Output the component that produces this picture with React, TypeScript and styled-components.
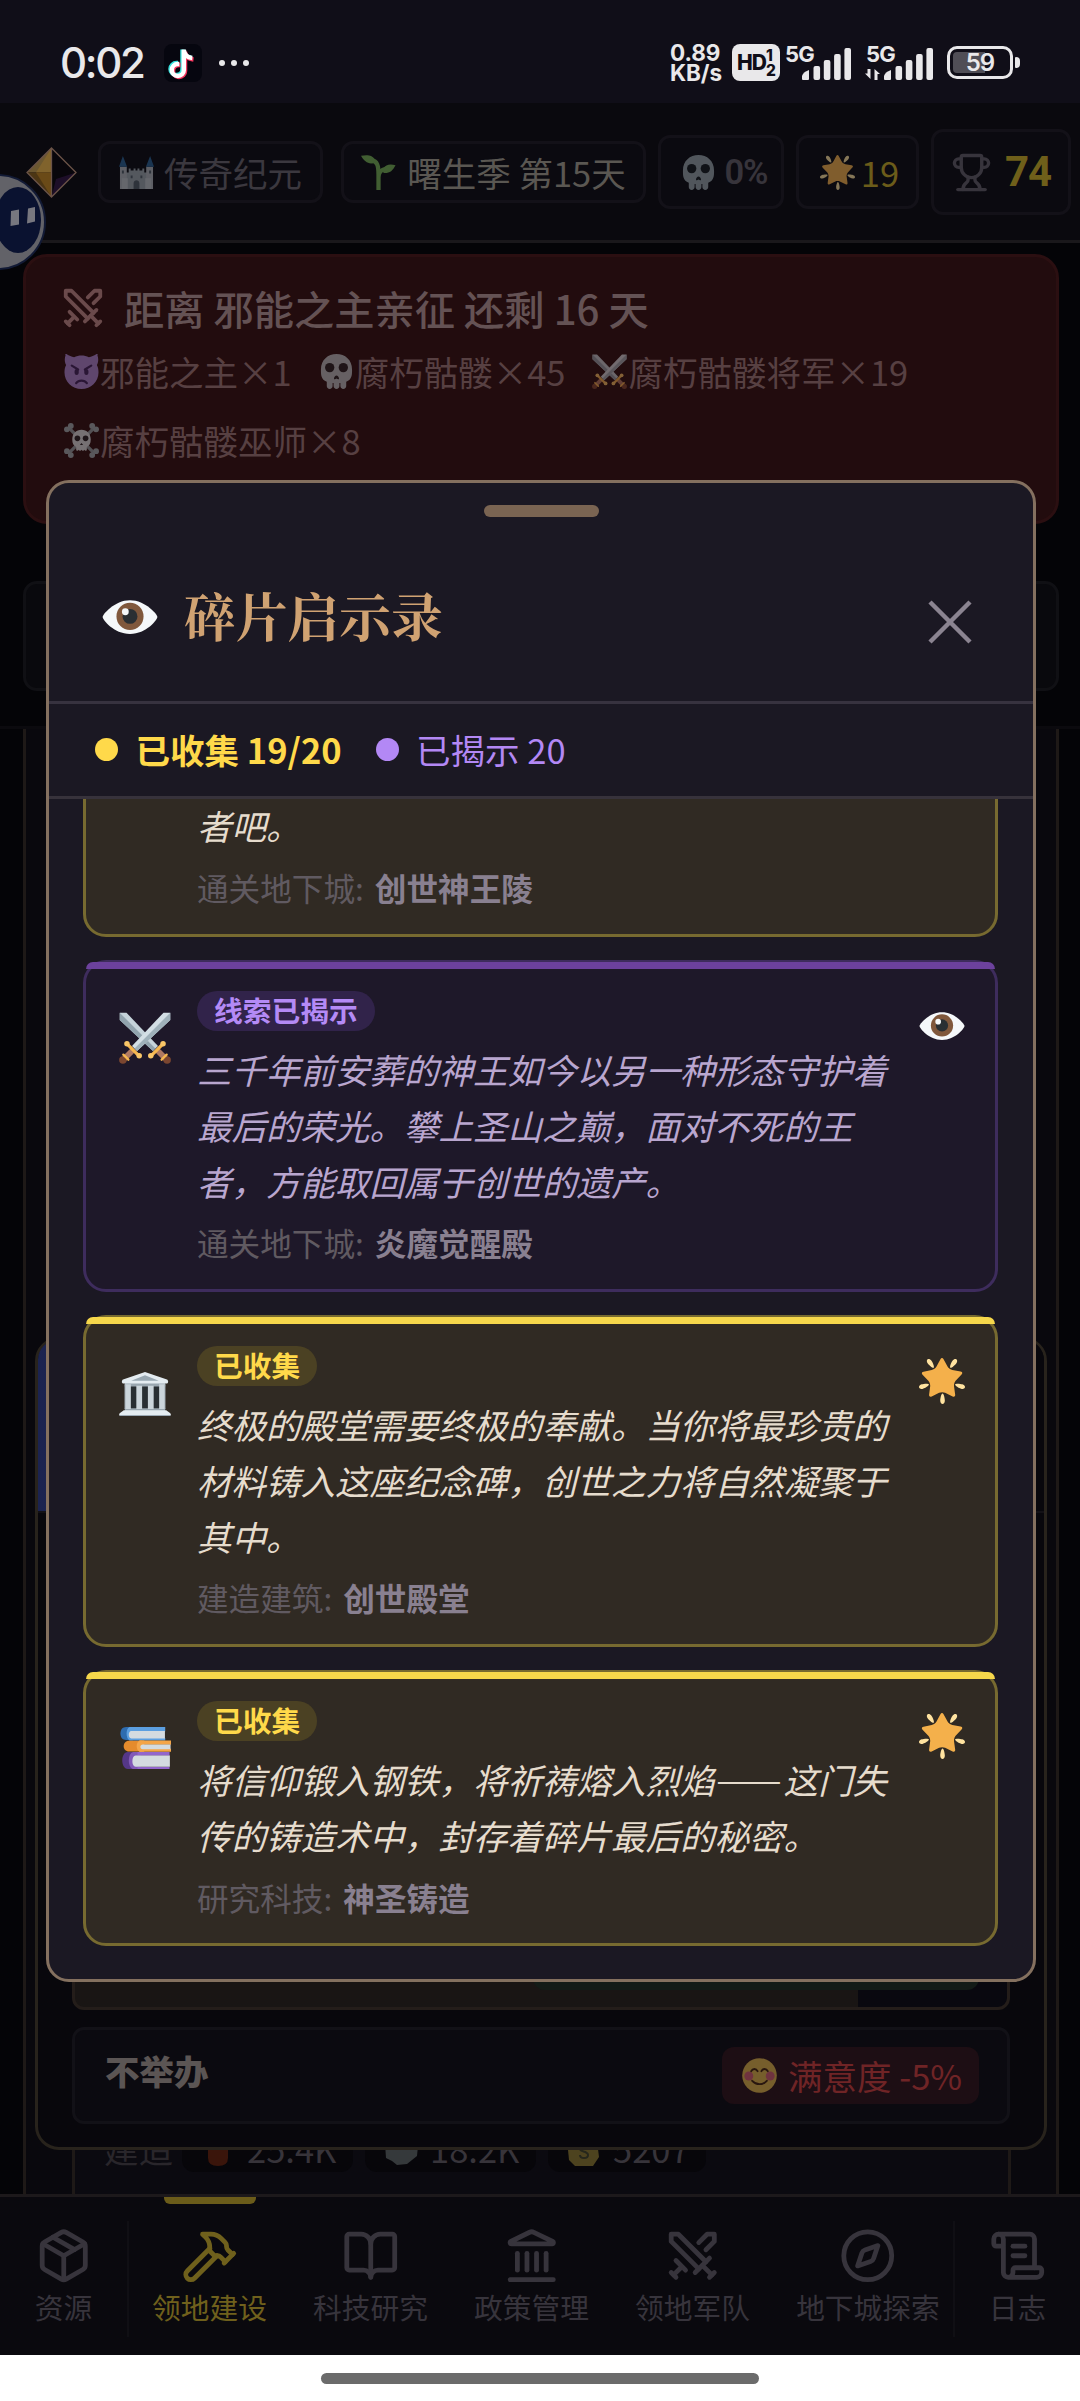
import React from "react";
import styled, { createGlobalStyle, css } from "styled-components";
import {
  BookOpen,
  Compass,
  Hammer,
  Landmark,
  Package,
  ScrollText,
  Swords,
  Trophy,
} from "lucide-react";

const sans = `"Noto Sans CJK SC", "Noto Sans", sans-serif`;
const serif = `"Noto Serif CJK SC", "Noto Serif SC", "Source Han Serif SC", "Songti SC", "Noto Sans CJK SC", serif`;

const GlobalStyle = createGlobalStyle`
  *, *::before, *::after { box-sizing: border-box; }
  body { margin: 0; background: #040407; font-family: ${sans}; }
`;

/* ---------- emoji drawings ---------- */

type ArtProps = { size: number; dim?: number };

const Art = styled.svg<{ $size: number; $dim?: number }>`
  display: block;
  flex: none;
  width: ${(p) => p.$size}px;
  height: ${(p) => p.$size}px;
  opacity: ${(p) => p.$dim ?? 1};
`;

const EyeArt = ({ size, dim }: ArtProps) => (
  <Art $size={size} $dim={dim} viewBox="0 0 36 36">
    <path
      fill="#F5F8FA"
      d="M35.6 18c0 1.6-7 10.9-17.6 10.9S.4 19.600.4 18C.4 16.400 8 7.200 18 7.200S35.600 16.400 35.600 18z"
    />
    <circle cx="18" cy="17.600" r="8.700" fill="#80583c" />
    <circle cx="18" cy="17.600" r="4.800" fill="#292F33" />
    <circle cx="15" cy="14.600" r="2.200" fill="#F5F8FA" />
  </Art>
);

const StarArt = ({ size, dim }: ArtProps) => (
  <Art $size={size} $dim={dim} viewBox="0 0 36 36">
    <path
      fill="#F4B04B"
      d="M28.840 17.638c-.987 1.044-1.633 3.067-1.438 4.493l.892 6.441c.197 1.427-.701 2.087-1.996 1.469l-5.851-2.796c-1.295-.620-3.408-.611-4.700.018l-5.826 2.842c-1.291.629-2.193-.026-2.007-1.452l.843-6.449c.186-1.427-.475-3.444-1.470-4.481l-4.494-4.688c-.996-1.037-.655-2.102.755-2.365l6.370-1.188c1.410-.263 3.116-1.518 3.793-2.789L16.762.956c.675-1.271 1.789-1.274 2.473-.009L22.330 6.660c.686 1.265 2.400 2.507 3.814 2.758l6.378 1.141c1.412.252 1.761 1.314.774 2.359z"
    />
    <path
      fill="#FFE3A0"
      d="M9.783 2.181c1.023 1.413 2.446 4.917 1.717 5.447-.728.531-3.607-1.910-4.630-3.323-1.022-1.413-.935-2.668-.131-3.254.804-.587 2.020-.282 3.044 1.130zm19.348 2.124C28.109 5.718 25.230 8.160 24.500 7.627c-.729-.530.695-4.033 1.719-5.445C27.242.768 28.457.463 29.262 1.051c.803.586.890 1.841-.131 3.254zM16.625 33.291c-.001-1.746.898-5.421 1.801-5.421.897 0 1.798 3.675 1.797 5.420 0 1.747-.804 2.712-1.800 2.710-.994.002-1.798-.962-1.798-2.709zm16.179-9.262c-1.655-.539-4.858-2.533-4.579-3.395.277-.858 4.037-.581 5.690-.041 1.655.540 2.321 1.605 2.013 2.556-.308.950-1.469 1.420-3.124.880zM2.083 20.594c1.655-.540 5.414-.817 5.694.044.276.857-2.928 2.854-4.581 3.392-1.654.540-2.818.070-3.123-.880-.308-.950.354-2.015 2.010-2.556z"
    />
  </Art>
);

const SkullArt = ({ size, dim }: ArtProps) => (
  <Art $size={size} $dim={dim} viewBox="0 0 36 36">
    <path
      fill="#CCDDE2"
      d="M34 16C34 6 26.837 0 18 0S2 6 2 16c0 5.574.002 10.388 6 12.640V33c0 1.657 1.343 3 3 3s3-1.343 3-3v-3.155l1 .070V33c0 1.657 1.343 3 3 3s3-1.343 3-3v-3.085l1-.070V33c0 1.657 1.344 3 3 3 1.657 0 3-1.343 3-3v-4.360c5.998-2.252 6-7.066 6-12.640z"
    />
    <circle cx="11" cy="14" r="4.800" fill="#1b2226" />
    <circle cx="25" cy="14" r="4.800" fill="#1b2226" />
    <path
      fill="#1b2226"
      d="M15.400 25.400c0-1.800 1.400-3.200 2.600-3.200s2.600 1.400 2.600 3.200c0 1-1.700.700-2.600-.200-.900.900-2.600 1.200-2.600.200z"
    />
  </Art>
);

const BonesArt = ({ size, dim }: ArtProps) => (
  <Art $size={size} $dim={dim} viewBox="0 0 36 36">
    <g stroke="#8fa5aa" strokeWidth="3.400" strokeLinecap="round">
      <path d="M6 6l24 24M30 6L6 30" />
    </g>
    <g fill="#9db4b9">
      <circle cx="3" cy="6.500" r="3" />
      <circle cx="7" cy="3" r="3" />
      <circle cx="29" cy="3" r="3" />
      <circle cx="33" cy="6.500" r="3" />
      <circle cx="3" cy="29" r="3" />
      <circle cx="7" cy="33" r="3" />
      <circle cx="29" cy="33" r="3" />
      <circle cx="33" cy="29" r="3" />
    </g>
    <path
      fill="#DDEBEE"
      d="M27.500 17c0-6-4-10-9.500-10s-9.500 4-9.500 10c0 4 1.300 6.500 4 7.700V27c0 2 2 2 2.500.500.500 1.500 2.500 1.500 3 0 .500 1.500 2.500 1.500 3 0 .500 1.500 2.500 1.500 2.500-.500v-2.300c2.700-1.200 4-3.700 4-7.700z"
    />
    <circle cx="13.800" cy="15.800" r="2.900" fill="#1b2226" />
    <circle cx="22.200" cy="15.800" r="2.900" fill="#1b2226" />
    <path fill="#1b2226" d="M18 20.500l1.700 2h-3.400z" />
  </Art>
);

const ImpArt = ({ size, dim }: ArtProps) => (
  <Art $size={size} $dim={dim} viewBox="0 0 36 36">
    <path
      fill="#9C80CC"
      d="M34.400 1.300c.700-1.500-.200-1.700-1.300-1-2.200 1.300-4.800 2.700-7.500 3C23.300 2.200 20.700 1.600 18 1.600s-5.300.600-7.600 1.700c-2.700-.300-5.300-1.700-7.500-3-1.100-.700-2-.500-1.300 1C.400 4.500.500 8.400 2.200 11.400.9 13.600.500 16.500.500 19 .500 28.400 8.300 36 18 36s17.500-7.600 17.500-17c0-2.500-.400-5.400-1.700-7.600 1.700-3 1.800-6.900.600-10.100z"
    />
    <path
      fill="none"
      stroke="#33205c"
      strokeWidth="2.300"
      strokeLinecap="round"
      d="M8 12l6.500 4M28 12l-6.500 4M12.500 30c2.500-3.600 8.500-3.600 11 0"
    />
    <ellipse cx="13" cy="18.500" rx="2.200" ry="3" fill="#33205c" />
    <ellipse cx="23" cy="18.500" rx="2.200" ry="3" fill="#33205c" />
  </Art>
);

const Sword = ({ light, dark }: { light: string; dark: string }) => (
  <>
    <path fill={light} d="M.5.500h4.700L27 23.500l-3.500 3.500L.500 5.500z" />
    <path fill={dark} d="M.5.500L25.200 25.300 23.500 27 .500 5.500z" />
    <path
      stroke="#B07A62"
      strokeWidth="4"
      strokeLinecap="round"
      d="M27.500 27.500l5 5"
    />
    <circle cx="33.300" cy="33.300" r="2.600" fill="#7B4630" />
    <path
      stroke="#F6B74F"
      strokeWidth="2.300"
      strokeLinecap="round"
      d="M22 30.500l8.600-8.600"
    />
    <circle cx="22" cy="30.300" r="1.900" fill="#F9C668" />
    <circle cx="30.500" cy="21.900" r="1.900" fill="#F9C668" />
    <path
      stroke="#F6B74F"
      strokeWidth="1.600"
      strokeLinecap="round"
      d="M29.500 33l3.500-3.500"
    />
  </>
);

const SwordsArt = ({ size, dim }: ArtProps) => (
  <Art $size={size} $dim={dim} viewBox="0 0 36 36">
    <Sword light="#C5D3DA" dark="#91A3AD" />
    <g transform="matrix(-1 0 0 1 36 0)">
      <Sword light="#D3DFE5" dark="#9FB1BA" />
    </g>
  </Art>
);

const TempleArt = ({ size, dim }: ArtProps) => (
  <Art $size={size} $dim={dim} viewBox="0 0 36 36">
    <path fill="#292F33" d="M4 12h28v18H4z" />
    <path fill="#99A6AF" d="M4 11h28v2.500H4zM4 28.500h28V31H4z" />
    <g fill="#CBD5DB">
      <path d="M4 12h4.200v17H4zM12 13h4v16h-4zM20 13h4v16h-4zM27.800 12H32v17h-4.200z" />
    </g>
    <path fill="#B4BFC7" d="M4 12h.8v17H4zM31.200 12h.8v17h-.8z" />
    <path
      fill="#E4ECF1"
      d="M18 3.500L2.800 8.600c-1 .400-1.300 2.900.4 2.900h29.600c1.700 0 1.400-2.500.4-2.900z"
    />
    <path fill="#99A8B2" d="M18 5.700L8.500 9.600h19z" />
    <path
      fill="#E4ECF1"
      d="M3.300 30h29.400l2.600 1.800c1 .700.700 2-.4 2H1.100c-1.100 0-1.400-1.300-.4-2z"
    />
    <path fill="#9BA9B4" d="M.5 33.200h35v.8H.5z" />
  </Art>
);

const BooksArt = ({ size, dim }: ArtProps) => (
  <Art $size={size} $dim={dim} viewBox="0 0 36 36">
    <path fill="#2E6CAF" d="M5 3.500h10v9H5C2.300 12.500 1 10.600 1 8s1.300-4.500 4-4.500z" />
    <path fill="#5C9FE0" d="M7.500 3.500H32v3H7zM7 11h25v1.800H7z" />
    <path fill="#5C9FE0" d="M7.500 3.500C4.500 4 4.500 12 7.500 12.700h2V3.500z" />
    <path fill="#D4DBE0" d="M8.500 6.300h23.300v5.100H8.500c-2.300 0-2.300-5.100 0-5.100z" />
    <path fill="#E58B2C" d="M7 13h9v7.500H7c-5 0-5-7.500 0-7.500z" />
    <path fill="#F4A548" d="M14 12.800h22v3H15zM14 18.600h22v2H14z" />
    <path fill="#F4A548" d="M14.500 12.800c-3 .700-3 7.200 0 7.800h3v-7.800z" />
    <path fill="#D4DBE0" d="M16.500 15.600h19.200v3.200H16.500c-2.300 0-2.300-3.200 0-3.200z" />
    <path fill="#553788" d="M6 20.800h9v11.700H6c-5 0-5-11.700 0-11.700z" />
    <path fill="#9266CC" d="M10 20.800h25v2.600H10zM10 30.900h25v1.700H10z" />
    <path fill="#8259B8" d="M9.800 20.800c-4 1-4 11 0 11.800h3V20.800z" />
    <path fill="#D4DBE0" d="M11.500 23.200h23.700v7.800H11.500c-3 0-3-7.800 0-7.800z" />
  </Art>
);

const CastleArt = ({ size, dim }: ArtProps) => (
  <Art $size={size} $dim={dim} viewBox="0 0 36 36">
    <path fill="#B5BEC6" d="M7 18h3v-4h2v2h3v-2h2v2h2v-2h2v2h3v-2h2v4h3v17H7z" />
    <path fill="#CBD0D6" d="M1 12h7v23H1zM28 12h7v23h-7z" />
    <path fill="#DCE1E6" d="M3 24h6v11H3zM27 24h6v11h-6z" />
    <path fill="#2F6EA8" d="M4 1l4.300 11H0zM32 1l4 11h-8.300z" />
    <path
      fill="#5d6a74"
      d="M15 35v-6c0-4 6-4 6 0v6zM3 16h2v3H3zM31 16h2v3h-2zM12 21h2v3h-2zM22 21h2v3h-2z"
    />
  </Art>
);

const SproutArt = ({ size, dim }: ArtProps) => (
  <Art $size={size} $dim={dim} viewBox="0 0 36 36">
    <path
      fill="none"
      stroke="#77B255"
      strokeWidth="4.400"
      d="M10 6c7-1 8 6 8 14v16M18 23c0-6 3-8 8-9"
    />
    <path
      fill="#77B255"
      d="M0 .800C6-.500 12-.200 14.500 5c.5 1 .2 2-.5 3C8 10 3.500 7 0 .800z"
    />
    <path
      fill="#77B255"
      d="M35.500 10.500c-3 6-6.500 8.500-12 8-1.500-1-1-3-.5-4.500 2.500-4.500 7-5 12.500-3.500z"
    />
  </Art>
);

const SmileArt = ({ size, dim }: ArtProps) => (
  <Art $size={size} $dim={dim} viewBox="0 0 36 36">
    <circle cx="18" cy="18" r="17.800" fill="#F2CC4D" />
    <circle cx="7" cy="18.500" r="4.600" fill="#E0667A" />
    <circle cx="29" cy="18.500" r="4.600" fill="#E0667A" />
    <path
      fill="none"
      stroke="#3A250a"
      strokeWidth="2"
      strokeLinecap="round"
      d="M9.500 13.500c1.500-3 5-3 6.500 0M20 13.500c1.500-3 5-3 6.500 0M10.500 23.500c4 4.500 11 4.500 15 0"
    />
  </Art>
);

/* ---------- status bar ---------- */

const Screen = styled.div`
  position: relative;
  width: 1080px;
  height: 2401px;
  overflow: hidden;
  display: flex;
  flex-direction: column;
  background: #040407;
`;

const StatusBar = styled.div`
  flex: none;
  height: 103px;
  display: flex;
  align-items: center;
  padding: 22px 60px 0 60px;
  background: #100e18;
  color: #e9e8ea;
`;

const Clock = styled.span`
  width: 104px;
  font: 500 42px/40px Inter, ${sans};
  letter-spacing: -2.300px;
  white-space: nowrap;
`;

const TikTok = styled.svg`
  width: 38px;
  height: 38px;
  margin-right: 17px;
`;

const More = styled.div`
  display: flex;
  gap: 6px;
  & > i {
    width: 6px;
    height: 6px;
    border-radius: 50%;
    background: #e9e8ea;
  }
`;

const StatusRight = styled.div`
  margin-left: auto;
  display: flex;
  align-items: center;
  height: 38px;
`;

const NetSpeed = styled.div`
  display: flex;
  flex-direction: column;
  width: 62px;
  font: 700 22.500px/20px Inter, ${sans};
  letter-spacing: -0.100px;
  white-space: nowrap;
`;

const HdBadge = styled.div`
  display: flex;
  align-items: center;
  justify-content: center;
  width: 48px;
  height: 37px;
  margin-right: 5px;
  border-radius: 8px;
  background: #e9e8ea;
  color: #100e18;
  font: 800 21px/37px Inter, ${sans};
  letter-spacing: -1px;
  & > small {
    display: flex;
    flex-direction: column;
    font: 800 15.500px/15px Inter, ${sans};
  }
`;

const Signal = styled.svg<{ $w: number; $mr: number }>`
  width: ${(p) => p.$w}px;
  height: 38px;
  margin-right: ${(p) => p.$mr}px;
  fill: #e9e8ea;
  overflow: visible;
  & text {
    font: 700 22px Inter, sans-serif;
    letter-spacing: -0.800px;
  }
`;

const Battery = styled.div`
  display: flex;
  align-items: center;
  &::after {
    content: "";
    width: 5px;
    height: 11px;
    margin-left: 2px;
    border-radius: 1px 4px 4px 1px;
    background: #e9e8ea;
  }
`;

const BatteryBody = styled.div`
  width: 66px;
  height: 33px;
  padding: 3px;
  border: 3px solid #e9e8ea;
  border-radius: 10px;
  font: 600 24px/21px Inter, ${sans};
  text-align: center;
  letter-spacing: -1px;
  & > div {
    height: 21px;
    border-radius: 4px;
    background: linear-gradient(90deg, #504e56 59%, transparent 59%);
  }
`;

/* ---------- game header ---------- */

const GameHeader = styled.header`
  position: relative;
  flex: none;
  height: 140px;
  display: flex;
  align-items: center;
  padding: 1px 9px 0 26px;
  background: #0a090e;
  border-bottom: 3px solid #1a181b;
`;

const Gem = styled.svg`
  width: 51px;
  height: 51px;
  margin-right: 21px;
`;

const Chip = styled.div<{
  $w: number;
  $h: number;
  $gap: number;
  $color: string;
  $mr?: number;
  $pl?: number;
}>`
  flex: none;
  display: flex;
  align-items: center;
  justify-content: center;
  gap: ${(p) => p.$gap}px;
  width: ${(p) => p.$w}px;
  height: ${(p) => p.$h}px;
  margin-right: ${(p) => p.$mr ?? 12}px;
  padding-left: ${(p) => p.$pl ?? 0}px;
  border: 3px solid #131118;
  border-radius: 12px;
  background: #0b0a10;
  color: ${(p) => p.$color};
  font-size: 34.5px;
  line-height: 36px;
  white-space: nowrap;
`;

const Figure = styled.b<{ $size: number; $weight: number }>`
  font: ${(p) => p.$weight} ${(p) => p.$size}px/36px Roboto, ${sans};
  letter-spacing: -1px;
`;

const FloatBall = styled.svg`
  position: absolute;
  left: 0;
  top: 70px;
  z-index: 2;
  width: 50px;
  height: 100px;
`;

/* ---------- page body behind the dialogs ---------- */

const Invasion = styled.section`
  flex: none;
  height: 270px;
  margin: 11px 21px 0 23px;
  padding: 22px 38px;
  border: 3px solid #2b0f11;
  border-radius: 24px;
  background: #220c0e;
`;

const InvasionTitle = styled.div`
  display: flex;
  align-items: center;
  gap: 18px;
  height: 58px;
  margin-left: -4px;
  color: #645254;
  font-size: 40.250px;
  font-weight: 500;
  line-height: 58px;
  white-space: nowrap;
  & > svg {
    flex: none;
  }
`;

const Troops = styled.div`
  display: flex;
  flex-wrap: wrap;
  column-gap: 27px;
  color: #574042;
  font-size: 34.500px;
`;

const Troop = styled.span`
  display: flex;
  align-items: center;
  gap: 1px;
  height: 69px;
  white-space: nowrap;
  line-height: 69px;
`;

const SubPanel = styled.div`
  flex: none;
  height: 110px;
  margin: 57px 21px 0 23px;
  border: 3px solid #101014;
  border-radius: 14px;
  background: #09090d;
`;

const Content = styled.main`
  flex: 1;
  min-height: 0;
  display: flex;
  flex-direction: column;
  margin-top: 35px;
  padding: 0 21px 0 23px;
  border-top: 3px solid #0b0a0e;
`;

const ContentColumn = styled.div`
  flex: 1;
  display: flex;
  flex-direction: column;
  justify-content: flex-end;
  padding: 0 45px 0 46px;
  border: 3px solid #1e1917;
  border-top: 0;
  border-bottom: 0;
  background: #09080d;
`;

const BuildCard = styled.div`
  display: flex;
  align-items: flex-start;
  height: 70px;
  padding: 0 29px;
  border: 3px solid #1e1917;
  border-top: 0;
  border-bottom: 0;
  background: #0b0a10;
  color: #29262b;
  font-size: 34.500px;
  line-height: 48px;
`;

const BuildLabel = styled.span`
  width: 78px;
`;

const Cost = styled.span<{ $w: number }>`
  display: flex;
  align-items: center;
  gap: 11px;
  width: ${(p) => p.$w}px;
  height: 48px;
  margin-right: 12px;
  padding-left: 18px;
  border-radius: 12px;
  background: #07060a;
  color: #37343a;
  & > svg {
    width: 36px;
    height: 36px;
  }
`;

/* ---------- festival dialog, under the main one ---------- */

const FestivalDialog = styled.section`
  position: absolute;
  left: 35px;
  top: 1337px;
  width: 1012px;
  height: 813px;
  display: flex;
  flex-direction: column;
  padding: 0 34px 23px;
  border: 3px solid #28231c;
  border-radius: 24px;
  background: #08070c;
`;

const FestivalHead = styled.div`
  flex: none;
  height: 173px;
  margin: 0 -34px auto;
  border-bottom: 2px solid #131116;
  border-radius: 20px 20px 0 0;
  background: linear-gradient(90deg, #1b2350 0%, #17183a 40%, #08070c 96%);
`;

const Option = styled.div<{ $plain?: boolean }>`
  display: flex;
  align-items: center;
  justify-content: space-between;
  height: ${(p) => (p.$plain ? 97 : 140)}px;
  margin-top: ${(p) => (p.$plain ? 17 : 0)}px;
  padding: 0 28px 0 30px;
  border: 3px solid ${(p) => (p.$plain ? "#121117" : "#241d1a")};
  border-radius: 12px;
  background: ${(p) =>
    p.$plain ? "#0b0a10" : "linear-gradient(90deg, #191514 84%, #09080f 84%)"};
  color: #5b5554;
  font-size: 34.500px;
  font-weight: 700;
  ${(p) =>
    !p.$plain &&
    css`
      align-items: flex-end;
      justify-content: flex-end;
      padding-bottom: 17px;
    `}
  & > b {
    padding-bottom: 12px;
  }
`;

const EffectGood = styled.i`
  width: 446px;
  height: 57px;
  border-radius: 12px;
  background: #131b17;
`;

const EffectBad = styled.span`
  display: flex;
  align-items: center;
  gap: 11px;
  width: 257px;
  height: 57px;
  padding-left: 20px;
  border-radius: 12px;
  background: #1d0e14;
  color: #6f2426;
  font-weight: 400;
  line-height: 57px;
  white-space: nowrap;
`;

/* ---------- fragment dialog ---------- */

const Dialog = styled.section`
  position: absolute;
  left: 46px;
  top: 480px;
  width: 990px;
  height: 1502px;
  display: flex;
  flex-direction: column;
  overflow: hidden;
  border: 3px solid #84705f;
  border-radius: 23px;
  background: #1b1823;
`;

const Grip = styled.div`
  flex: none;
  width: 115px;
  height: 12px;
  margin: 22px auto 0;
  border-radius: 6px;
  background: #7a6452;
`;

const DialogHead = styled.div`
  flex: none;
  display: flex;
  align-items: center;
  height: 187px;
  padding: 28px 61px 13px 53px;
  border-bottom: 3px solid #37323f;
`;

const DialogTitle = styled.h2`
  margin: 0 auto 3px 26px;
  color: #d0a272;
  font: 700 51.750px/70px ${serif};
`;

const Close = styled.svg`
  width: 44px;
  height: 44px;
  margin-top: 10px;
  stroke: #8b8491;
  stroke-width: 4.500;
`;

const Stats = styled.div`
  flex: none;
  display: flex;
  align-items: center;
  height: 95px;
  padding: 0 0 2px 46px;
  border-bottom: 3px solid #37323b;
`;

const Stat = styled.span<{ $color: string; $bold?: boolean }>`
  display: flex;
  align-items: center;
  gap: 17.500px;
  margin-right: 34px;
  color: ${(p) => p.$color};
  font-size: 34.500px;
  font-weight: ${(p) => (p.$bold ? 700 : 400)};
  line-height: 50px;
  white-space: nowrap;
  &::before {
    content: "";
    width: 23px;
    height: 23px;
    border-radius: 50%;
    background: currentColor;
  }
`;

const ClueList = styled.div`
  flex: 1;
  min-height: 0;
  display: flex;
  flex-direction: column;
  justify-content: flex-end;
  gap: 23px;
  overflow: hidden;
  padding: 0 35px 33px 34px;
`;

type Tone = "gold" | "violet";

const tones = {
  gold: {
    border: "#776a30",
    bg: "#302a23",
    bar: "#f6d74b",
    badge: "#4b4123",
    badgeText: "#ffd94a",
    clue: "#e6dccd",
  },
  violet: {
    border: "#3e2c5d",
    bg: "#1e1829",
    bar: "#6c419d",
    badge: "#31234a",
    badgeText: "#b48af6",
    clue: "#b9a6cf",
  },
};

const Card = styled.article<{ $tone: Tone }>`
  position: relative;
  flex: none;
  display: flex;
  align-items: flex-start;
  padding: 28.500px 30px 23.500px 33px;
  border: 3px solid ${(p) => tones[p.$tone].border};
  border-radius: 23px;
  background: ${(p) => tones[p.$tone].bg};
  &::before {
    content: "";
    position: absolute;
    left: 0;
    right: 0;
    top: -1px;
    height: 7px;
    border-radius: 7px 7px 0 0;
    background: ${(p) => tones[p.$tone].bar};
  }
`;

const CardIcon = styled.div`
  flex: none;
  width: 78px;
  padding-top: 20.500px;
`;

const CardBody = styled.div`
  flex: 1;
  min-width: 0;
`;

const CardState = styled.div`
  flex: none;
  width: 46px;
  padding-top: 12px;
`;

const Badge = styled.div<{ $tone: Tone }>`
  width: max-content;
  height: 40px;
  padding: 0 17px;
  border-radius: 20px;
  background: ${(p) => tones[p.$tone].badge};
  color: ${(p) => tones[p.$tone].badgeText};
  font-size: 28.750px;
  font-weight: 700;
  line-height: 38px;
`;

const Clue = styled.p<{ $tone: Tone }>`
  margin: 9.500px -10px 0 0;
  color: ${(p) => tones[p.$tone].clue};
  font-size: 34.500px;
  font-style: italic;
  line-height: 56.060px;
  white-space: nowrap;
`;

const Dash = styled.span`
  display: inline-block;
  width: 69px;
  height: 56px;
  vertical-align: top;
  font-family: ${serif};
  font-size: 39px;
  font-style: normal;
  font-weight: 300;
  line-height: 50px;
  text-align: center;
`;

const Source = styled.div`
  margin-top: 11.500px;
  color: #605a61;
  font-size: 31.625px;
  line-height: 45px;
  white-space: nowrap;
  & > b {
    margin-left: 11px;
    color: #898090;
  }
`;

/* ---------- bottom navigation ---------- */

const Nav = styled.nav`
  position: relative;
  flex: none;
  display: flex;
  align-items: stretch;
  height: 161px;
  border-top: 3px solid #1d191b;
  background: #0a090e;
`;

const NavScroll = styled.div`
  flex: 1;
  min-width: 0;
  display: flex;
  overflow: hidden;
`;

const NavDivider = styled.i`
  flex: none;
  width: 2px;
  height: 116px;
  margin-top: 24px;
  background: #100f14;
`;

const NavItem = styled.div<{ $w: number; $active?: boolean }>`
  position: relative;
  flex: none;
  display: flex;
  flex-direction: column;
  align-items: center;
  width: ${(p) => p.$w}px;
  padding-top: 30px;
  color: ${(p) => (p.$active ? "#6f601c" : "#37343c")};
  font-size: 28.750px;
  line-height: 44px;
  white-space: nowrap;
  ${(p) =>
    p.$active &&
    css`
      &::before {
        content: "";
        position: absolute;
        top: 0;
        width: 92px;
        height: 7px;
        border-radius: 0 0 6px 6px;
        background: #6b5c1a;
      }
    `}
`;

const HomeBar = styled.div`
  flex: none;
  height: 46px;
  padding-top: 18px;
  background: #fff;
  &::before {
    content: "";
    display: block;
    width: 438px;
    height: 11px;
    margin: 0 auto;
    border-radius: 6px;
    background: #6b6b6b;
  }
`;

/* ---------- data ---------- */

type ClueData = {
  tone: Tone;
  icon?: React.ReactNode;
  badge?: string;
  lines: React.ReactNode[];
  label: string;
  source: string;
};

const clues: ClueData[] = [
  {
    tone: "gold",
    lines: ["者吧。"],
    label: "通关地下城:",
    source: "创世神王陵",
  },
  {
    tone: "violet",
    icon: <SwordsArt size={52} />,
    badge: "线索已揭示",
    lines: [
      "三千年前安葬的神王如今以另一种形态守护着",
      "最后的荣光。攀上圣山之巅，面对不死的王",
      "者，方能取回属于创世的遗产。",
    ],
    label: "通关地下城:",
    source: "炎魔觉醒殿",
  },
  {
    tone: "gold",
    icon: <TempleArt size={52} />,
    badge: "已收集",
    lines: [
      "终极的殿堂需要终极的奉献。当你将最珍贵的",
      "材料铸入这座纪念碑，创世之力将自然凝聚于",
      "其中。",
    ],
    label: "建造建筑:",
    source: "创世殿堂",
  },
  {
    tone: "gold",
    icon: <BooksArt size={52} />,
    badge: "已收集",
    lines: [
      <>
        将信仰锻入钢铁，将祈祷熔入烈焰<Dash>——</Dash>这门失
      </>,
      "传的铸造术中，封存着碎片最后的秘密。",
    ],
    label: "研究科技:",
    source: "神圣铸造",
  },
];

const tabs = [
  { icon: Hammer, label: "领地建设", w: 161, active: true },
  { icon: BookOpen, label: "科技研究", w: 161 },
  { icon: Landmark, label: "政策管理", w: 161 },
  { icon: Swords, label: "领地军队", w: 161 },
  { icon: Compass, label: "地下城探索", w: 190 },
];

const Bars = ({ x }: { x: number }) => (
  <g>
    <path d={`M${x} 35v-3q1-4 7-6v9q0 1-1 1h-5q-1 0-1-1z`} />
    {[0, 1, 2, 3].map((i) => (
      <rect
        key={i}
        x={x + 11.5 + i * 10.3}
        y={22 - i * 6}
        width={6.6}
        height={14 + i * 6}
        rx={2}
      />
    ))}
  </g>
);

export default function App() {
  return (
    <>
      <GlobalStyle />
      <Screen lang="zh-CN">
        <StatusBar>
          <Clock>0:02</Clock>
          <TikTok viewBox="0 0 38 38">
            <rect width="38" height="38" rx="8" fill="#06060f" />
            <g fill="none" strokeWidth="4.500">
              <path
                stroke="#35e0dc"
                d="M18.500 5.500v19.500a6 6 0 1 1-6-6h1.500M18.500 6c.5 4.500 3.500 7 8.500 7.500"
              />
              <path
                stroke="#f4345c"
                d="M21 7.500v19.500a6 6 0 1 1-6-6h1.500M21 8c.5 4.500 3.500 7 8.500 7.500"
              />
              <path
                stroke="#fff"
                d="M19.800 5.500v20.500a6 6 0 1 1-6-6h1.500M19.800 6c.5 5 3.500 7.500 8.500 8"
              />
            </g>
          </TikTok>
          <More>
            <i />
            <i />
            <i />
          </More>
          <StatusRight>
            <NetSpeed>
              <span>0.89</span>
              <span>KB/s</span>
            </NetSpeed>
            <HdBadge>
              HD
              <small>
                <span>1</span>
                <span>2</span>
              </small>
            </HdBadge>
            <Signal $w={68} $mr={13} viewBox="0 0 68 38">
              <text x="0" y="17.500">
                5G
              </text>
              <Bars x={17} />
            </Signal>
            <Signal $w={68} $mr={13} viewBox="0 0 68 38">
              <text x="0" y="17.500">
                5G
              </text>
              <path d="M4.500 25v10L-1 29.500h2.500V25zM8.500 36V25l5.500 5h-2.500v6z" />
              <Bars x={18} />
            </Signal>
            <Battery>
              <BatteryBody>
                <div>59</div>
              </BatteryBody>
            </Battery>
          </StatusRight>
        </StatusBar>

        <GameHeader>
          <Gem viewBox="0 0 51 51">
            <path fill="#6b5730" d="M25.500 1L1 25.500h24.500z" />
            <path fill="#80632c" d="M25.500 1L10 25.500h15.500z" />
            <path fill="#4c3614" d="M1 25.500L25.500 50V25.500z" />
            <path fill="#6a4a17" d="M10 25.500L25.500 50V25.500z" />
            <path fill="#08060b" d="M25.500 1L50 25.500 25.500 50z" />
            <path fill="#1d0e28" d="M30 32l20-6.500L25.500 50z" />
            <path
              fill="none"
              stroke="#6b5348"
              strokeWidth="1.300"
              d="M25.500 1L50 25.500 25.500 50 1 25.500zM25.500 1v49"
            />
          </Gem>
          <Chip $w={225} $h={62} $gap={10} $color="#3b383f" $mr={18}>
            <CastleArt size={35} dim={0.43} />
            传奇纪元
          </Chip>
          <Chip $w={305} $h={62} $gap={11} $color="#5a5752">
            <SproutArt size={35} dim={0.5} />
            曙生季 第15天
          </Chip>
          <Chip $w={126} $h={74} $gap={8} $pl={7} $color="#37343b">
            <SkullArt size={35} dim={0.36} />
            <Figure $size={34.5} $weight={600}>
              0%
            </Figure>
          </Chip>
          <Chip $w={123} $h={74} $gap={6} $pl={4} $color="#6b5c1a">
            <StarArt size={35} dim={0.5} />
            19
          </Chip>
          <Chip $w={140} $h={86} $gap={13} $color="#6f5f1a" $mr={0}>
            <Trophy size={41} color="#37343c" strokeWidth={2} />
            <Figure $size={42} $weight={700}>
              74
            </Figure>
          </Chip>
          <FloatBall viewBox="0 0 50 100">
            <circle
              cx="-2"
              cy="49"
              r="47"
              fill="#626268"
              stroke="#121a35"
              strokeWidth="2"
            />
            <ellipse cx="18" cy="47" rx="23" ry="33" fill="#0a1230" />
            <path
              fill="#77777f"
              d="M11 38l8-1.500v15L10.500 53zM28 35.500l7-1.500v14.500l-8 2z"
            />
          </FloatBall>
        </GameHeader>

        <Invasion>
          <InvasionTitle>
            <Swords size={46} color="#6a4a4b" strokeWidth={2} />
            距离 邪能之主亲征 还剩 16 天
          </InvasionTitle>
          <Troops>
            <Troop>
              <ImpArt size={35} dim={0.5} />
              邪能之主×1
            </Troop>
            <Troop>
              <SkullArt size={35} dim={0.4} />
              腐朽骷髅×45
            </Troop>
            <Troop>
              <SwordsArt size={35} dim={0.45} />
              腐朽骷髅将军×19
            </Troop>
            <Troop>
              <BonesArt size={35} dim={0.45} />
              腐朽骷髅巫师×8
            </Troop>
          </Troops>
        </Invasion>
        <SubPanel />
        <Content>
          <ContentColumn>
            <BuildCard>
              <BuildLabel>建造</BuildLabel>
              <Cost $w={171}>
                <svg viewBox="0 0 36 36">
                  <path fill="#3a150b" d="M8 4h20v24q0 8-10 8T8 28z" />
                </svg>
                25.4K
              </Cost>
              <Cost $w={171}>
                <svg viewBox="0 0 36 36">
                  <path
                    fill="#35393b"
                    d="M2 14L12 6l16 2 7 8-1 10-5 4-5 4-10 1-5-4-6-3z"
                  />
                </svg>
                18.2K
              </Cost>
              <Cost $w={158}>
                <svg viewBox="0 0 36 36">
                  <path fill="#4d431f" d="M12 4h12l8 15 1 8-6 9H9l-6-6-1-10z" />
                  <path
                    fill="none"
                    stroke="#26271c"
                    strokeWidth="2"
                    d="M22 19c-1-3-8-3-8 0s8 2 8 6-8 4-8 0"
                  />
                </svg>
                5207
              </Cost>
            </BuildCard>
          </ContentColumn>
        </Content>

        <Nav>
          <NavItem $w={127}>
            <Package size={57.5} />
            资源
          </NavItem>
          <NavDivider />
          <NavScroll>
            {tabs.map(({ icon: Icon, label, w, active }) => (
              <NavItem key={label} $w={w} $active={active}>
                <Icon size={57.5} />
                {label}
              </NavItem>
            ))}
          </NavScroll>
          <NavDivider />
          <NavItem $w={125}>
            <ScrollText size={57.5} />
            日志
          </NavItem>
        </Nav>
        <HomeBar />

        <FestivalDialog>
          <FestivalHead />
          <Option>
            <EffectGood />
          </Option>
          <Option $plain>
            <b>不举办</b>
            <EffectBad>
              <SmileArt size={35} dim={0.42} />
              满意度 -5%
            </EffectBad>
          </Option>
        </FestivalDialog>

        <Dialog>
          <Grip />
          <DialogHead>
            <EyeArt size={56} />
            <DialogTitle>碎片启示录</DialogTitle>
            <Close viewBox="0 0 44 44">
              <path d="M2 2l40 40M42 2L2 42" />
            </Close>
          </DialogHead>
          <Stats>
            <Stat $color="#ffd94a" $bold>
              已收集 19/20
            </Stat>
            <Stat $color="#b388f5">已揭示 20</Stat>
          </Stats>
          <ClueList>
            {clues.map((c) => (
              <Card key={c.source} $tone={c.tone}>
                <CardIcon>{c.icon}</CardIcon>
                <CardBody>
                  {c.badge && <Badge $tone={c.tone}>{c.badge}</Badge>}
                  <Clue $tone={c.tone}>
                    {c.lines.map((line, i) => (
                      <React.Fragment key={i}>
                        {line}
                        <br />
                      </React.Fragment>
                    ))}
                  </Clue>
                  <Source>
                    {c.label}
                    <b>{c.source}</b>
                  </Source>
                </CardBody>
                {c.badge && (
                  <CardState>
                    {c.tone === "gold" ? (
                      <StarArt size={46} />
                    ) : (
                      <EyeArt size={46} />
                    )}
                  </CardState>
                )}
              </Card>
            ))}
          </ClueList>
        </Dialog>
      </Screen>
    </>
  );
}
